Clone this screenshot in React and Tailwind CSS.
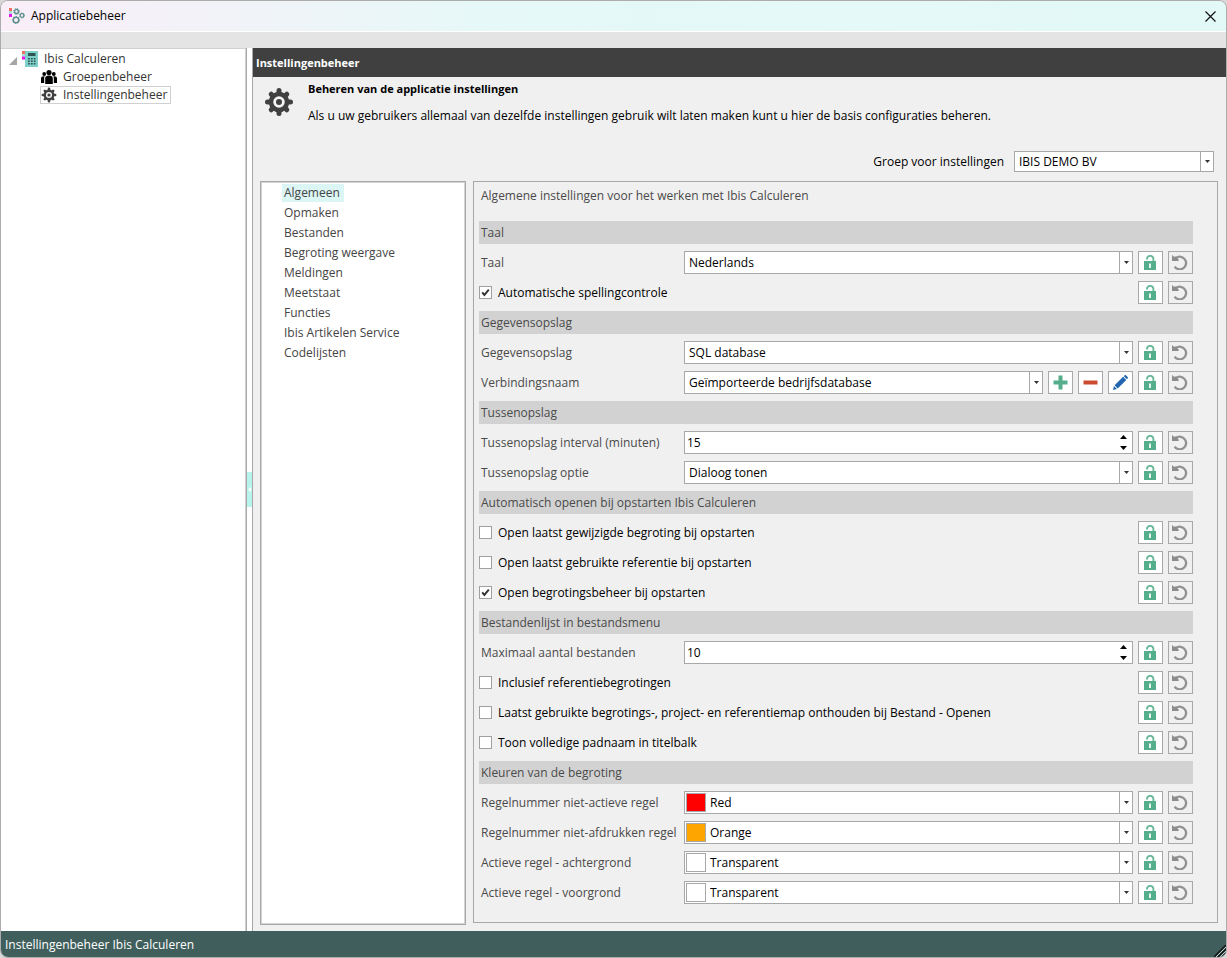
import { useState } from "react";

const CATEGORIES = [
  "Algemeen",
  "Opmaken",
  "Bestanden",
  "Begroting weergave",
  "Meldingen",
  "Meetstaat",
  "Functies",
  "Ibis Artikelen Service",
  "Codelijsten",
];

const SETTINGS = [
  { type: "header", label: "Taal" },
  { type: "select", id: "taal", label: "Taal", value: "Nederlands" },
  { type: "check", id: "spelling", label: "Automatische spellingcontrole", checked: true },
  { type: "header", label: "Gegevensopslag" },
  { type: "select", id: "opslag", label: "Gegevensopslag", value: "SQL database" },
  {
    type: "select",
    id: "verbinding",
    label: "Verbindingsnaam",
    value: "Geïmporteerde bedrijfsdatabase",
    editable: true,
  },
  { type: "header", label: "Tussenopslag" },
  { type: "number", id: "interval", label: "Tussenopslag interval (minuten)", value: 15 },
  { type: "select", id: "optie", label: "Tussenopslag optie", value: "Dialoog tonen" },
  { type: "header", label: "Automatisch openen bij opstarten Ibis Calculeren" },
  { type: "check", id: "laatstGewijzigd", label: "Open laatst gewijzigde begroting bij opstarten" },
  { type: "check", id: "laatstReferentie", label: "Open laatst gebruikte referentie bij opstarten" },
  { type: "check", id: "begrotingsbeheer", label: "Open begrotingsbeheer bij opstarten", checked: true },
  { type: "header", label: "Bestandenlijst in bestandsmenu" },
  { type: "number", id: "maxBestanden", label: "Maximaal aantal bestanden", value: 10 },
  { type: "check", id: "inclReferentie", label: "Inclusief referentiebegrotingen" },
  {
    type: "check",
    id: "mapOnthouden",
    label: "Laatst gebruikte begrotings-, project- en referentiemap onthouden bij Bestand - Openen",
  },
  { type: "check", id: "padnaam", label: "Toon volledige padnaam in titelbalk" },
  { type: "header", label: "Kleuren van de begroting" },
  { type: "select", id: "nietActief", label: "Regelnummer niet-actieve regel", value: "Red", swatch: "bg-[#ff0000]" },
  {
    type: "select",
    id: "nietAfdrukken",
    label: "Regelnummer niet-afdrukken regel",
    value: "Orange",
    swatch: "bg-[#ffa500]",
  },
  { type: "select", id: "achtergrond", label: "Actieve regel - achtergrond", value: "Transparent", swatch: "bg-white" },
  { type: "select", id: "voorgrond", label: "Actieve regel - voorgrond", value: "Transparent", swatch: "bg-white" },
];

export default function App() {
  const [category, setCategory] = useState("Algemeen");

  return (
    <div className="min-h-screen bg-[#d8d8d8] flex flex-col font-['Open_Sans','Noto_Sans',sans-serif] text-xs leading-4 text-black">
      <div className="flex-1 flex flex-col rounded-lg border border-[#acacac] bg-[#f0f0f0] overflow-hidden">
        {/* ── Title bar ── */}
        <header className="h-[31px] shrink-0 flex items-center gap-1.5 px-2 border-b border-white bg-linear-to-r from-[#faeef8] via-[#e6f8f8] via-40% to-[#e2f9f7]">
          <AppLogo />
          <h1 className="flex-1">Applicatiebeheer</h1>
          <button type="button" aria-label="Sluiten" className="p-0.5">
            <svg width="11" height="11" viewBox="0 0 11 11" stroke="#111" strokeWidth="1.2">
              <path d="M.5.5l10 10M10.5.5l-10 10" />
            </svg>
          </button>
        </header>
        <div className="h-4 shrink-0 bg-[#e4e4e4]" />

        <div className="flex-1 flex">
          <Tree />

          {/* ── Splitter ── */}
          <div className="w-[7px] shrink-0 flex items-center border-x border-[#a8a8a8] bg-white">
            <div className="w-full h-[35px] flex items-center justify-center bg-[#b8f4ee]">
              <svg width="3" height="5" viewBox="0 0 3 5" fill="#fff">
                <path d="M3 0v5L0 2.5z" />
              </svg>
            </div>
          </div>

          <main className="flex-1 min-w-0 flex flex-col">
            <h2 className="h-[29px] shrink-0 flex items-center px-[3px] bg-[#404040] text-white text-[11px] font-bold">
              Instellingenbeheer
            </h2>

            <div className="flex-1 flex flex-col pl-[7px] pr-2 pb-1.5">
              <div className="flex gap-3.5 pt-1 pl-1">
                <Gear className="size-[30px] mt-1.5" />
                <div className="flex flex-col gap-[11px]">
                  <h3 className="text-[11px] leading-4 font-bold">Beheren van de applicatie instellingen</h3>
                  <p>
                    Als u uw gebruikers allemaal van dezelfde instellingen gebruik wilt laten maken kunt u hier de basis
                    configuraties beheren.
                  </p>
                </div>
              </div>

              <div className="flex items-center justify-end gap-2.5 mt-[27px] mb-[9px] pr-1">
                <label htmlFor="groep">Groep voor instellingen</label>
                <div className="w-[200px] h-[21px] flex">
                  <SelectBox id="groep" value="IBIS DEMO BV" />
                </div>
              </div>

              <div className="flex-1 flex gap-[7px]">
                <nav className="w-[206px] shrink-0 border border-[#a8a8a8] bg-white">
                  <ul className="h-full border border-[#d4d4d4] pl-5">
                    {CATEGORIES.map((name) => (
                      <li key={name} className="h-5 flex items-center">
                        <button
                          type="button"
                          onClick={() => setCategory(name)}
                          className={`h-[18px] pl-0.5 pr-1 text-[#444] ${name === category ? "bg-[#dcf5f5]" : ""}`}
                        >
                          {name}
                        </button>
                      </li>
                    ))}
                  </ul>
                </nav>

                <form className="flex-1 min-w-0 mb-0.5 border border-[#a8a8a8] pt-1.5 pl-[5px] pr-6 pb-[17px]">
                  <p className="pl-0.5 mb-[17px] text-[#4a4a4a]">
                    Algemene instellingen voor het werken met Ibis Calculeren
                  </p>
                  <div className="flex flex-col gap-[7px]">
                    {SETTINGS.map((item) => (
                      <SettingRow key={item.id || `h-${item.label}`} item={item} />
                    ))}
                  </div>
                </form>
              </div>
            </div>
          </main>
        </div>

        {/* ── Status bar ── */}
        <footer className="h-[26px] shrink-0 flex items-end justify-between pl-1 bg-[#405f5c] text-white">
          <span className="pb-1">Instellingenbeheer Ibis Calculeren</span>
          <svg width="12" height="12" viewBox="0 0 12 12" fill="none">
            <path d="M0 12L12 0M4 12l8-8M8 12l4-4" stroke="#111" strokeWidth="1.4" />
            <path d="M2 12L12 2M6 12l6-6" stroke="#b9d2cf" strokeWidth="1" />
          </svg>
        </footer>
      </div>
    </div>
  );
}

// ── Tree on the left ──
function Tree() {
  return (
    <nav className="w-[245px] shrink-0 border-t border-r border-[#d0d0d0] bg-white text-[#333] pt-px">
      <button type="button" className="h-[18px] flex items-center pl-2">
        <svg width="8" height="8" viewBox="0 0 8 8" className="mt-1">
          <path d="M8 0v8H0z" fill="#a6a6a6" />
        </svg>
        <Calculator />
        <span className="pl-1.5">Ibis Calculeren</span>
      </button>
      <ul className="pl-[39px]">
        <li>
          <button type="button" className="h-[18px] flex items-center gap-1.5 pl-px">
            <People />
            Groepenbeheer
          </button>
        </li>
        <li>
          <button type="button" className="h-[18px] flex items-center gap-1.5 pr-[3px] border border-[#d0d0d0]">
            <Gear className="size-4" />
            Instellingenbeheer
          </button>
        </li>
      </ul>
    </nav>
  );
}

// ── One line of the settings form ──
function SettingRow({ item }) {
  if (item.type === "header") {
    return <h4 className="h-[23px] flex items-center pl-0.5 bg-[#d2d2d2] text-[#4a4a4a]">{item.label}</h4>;
  }

  return (
    <div className="h-[23px] flex gap-[5px]">
      {item.type === "check" ? (
        <div className="flex-1 flex items-center gap-1.5">
          <span className="relative size-[13px] flex">
            <input
              id={item.id}
              type="checkbox"
              defaultChecked={item.checked}
              className="peer appearance-none size-[13px] border border-[#a0a0a0] bg-white"
            />
            <svg
              viewBox="0 0 13 13"
              className="absolute inset-0 hidden peer-checked:block pointer-events-none"
              fill="none"
              stroke="#333"
              strokeWidth="1.9"
            >
              <path d="M3.2 6.3l2.2 2.6L9.8 3.6" />
            </svg>
          </span>
          <label htmlFor={item.id}>{item.label}</label>
        </div>
      ) : (
        <>
          <label htmlFor={item.id} className="w-[200px] shrink-0 flex items-center pl-0.5 text-[#4a4a4a]">
            {item.label}
          </label>
          {item.type === "select" ? (
            <SelectBox id={item.id} value={item.value} swatch={item.swatch} />
          ) : (
            <NumberBox id={item.id} value={item.value} />
          )}
        </>
      )}

      {item.editable && (
        <>
          <IconButton label="Toevoegen">
            <svg width="15" height="15" viewBox="0 0 15 15" fill="#55ae8b">
              <path d="M5.500 .5h4v5h5v4h-5v5h-4v-5h-5v-4h5z" />
            </svg>
          </IconButton>
          <IconButton label="Verwijderen">
            <svg width="15" height="15" viewBox="0 0 15 15" fill="#cb4b2f">
              <path d="M.5 5.500h14v4H.5z" />
            </svg>
          </IconButton>
          <IconButton label="Bewerken">
            <svg width="15" height="15" viewBox="0 0 16 16" fill="#2065b0">
              <path d="M0 16l1-4.200L4.200 15zM1.700 11L10.800 1.900l3.300 3.300L5 14.300zM11.500 1.200L12.300.4c.5-.5 1.200-.5 1.700 0l1.600 1.600c.5.5.5 1.200 0 1.700l-.8.8z" />
            </svg>
          </IconButton>
        </>
      )}

      <IconButton label="Vergrendelen">
        <svg width="13" height="15" viewBox="0 0 13 15">
          <path d="M3 4.600V4a3.200 3.200 0 0 1 6.400 0v2.500" fill="none" stroke="#68b899" strokeWidth="1.900" />
          <path d="M0 6h12v9H0z" fill="#55ae8b" />
          <path d="M5 8.500h2V13H5z" fill="#e4f4ee" />
        </svg>
      </IconButton>
      <button
        type="button"
        disabled
        aria-label="Herstellen"
        className="w-[25px] h-full shrink-0 flex items-center justify-center border border-[#a8a8a8]"
      >
        <svg width="17" height="15" viewBox="0 0 17 15" fill="none">
          <path d="M4 3A6.300 6.300 0 1 1 2.600 11.600" stroke="#929292" strokeWidth="2.300" />
          <path d="M0 0l2 1.800L4.200 1.400 6.600 4.400V6H0z" fill="#8c8c8c" />
        </svg>
      </button>
    </div>
  );
}

function IconButton({ label, children }) {
  return (
    <button
      type="button"
      aria-label={label}
      className="w-[25px] h-full shrink-0 flex items-center justify-center border border-[#a8a8a8] bg-white"
    >
      {children}
    </button>
  );
}

function SelectBox({ id, value, swatch }) {
  return (
    <div className="relative flex-1 min-w-0 flex border border-[#a8a8a8] bg-white">
      {swatch && <span className={`w-5 shrink-0 ml-px my-px border border-[#a8a8a8] ${swatch}`} />}
      <select id={id} defaultValue={value} className="flex-1 min-w-0 appearance-none bg-transparent pl-1 pr-4">
        <option>{value}</option>
      </select>
      <span className="absolute inset-y-0 right-0 w-[13px] flex items-center justify-center border-l border-[#a8a8a8] pointer-events-none">
        <svg width="5" height="3" viewBox="0 0 5 3" fill="#333">
          <path d="M0 0h5L2.500 3z" />
        </svg>
      </span>
    </div>
  );
}

function NumberBox({ id, value }) {
  const [current, setCurrent] = useState(value);

  return (
    <div className="flex-1 min-w-0 flex border border-[#a8a8a8] bg-white">
      <input
        id={id}
        type="text"
        inputMode="numeric"
        value={current}
        onChange={(e) => setCurrent(Number(e.target.value) || 0)}
        className="flex-1 min-w-0 pl-0.5"
      />
      <div className="w-[17px] flex flex-col justify-between py-[3px]">
        <button type="button" aria-label="Verhogen" onClick={() => setCurrent(current + 1)}>
          <svg width="7" height="4" viewBox="0 0 7 4" className="mx-auto">
            <path d="M0 4h7L3.500 0z" />
          </svg>
        </button>
        <button type="button" aria-label="Verlagen" onClick={() => setCurrent(current - 1)}>
          <svg width="7" height="4" viewBox="0 0 7 4" className="mx-auto">
            <path d="M0 0h7L3.500 4z" />
          </svg>
        </button>
      </div>
    </div>
  );
}

// ── Icons ───────────────────────────────────────────────────────────────────
function AppLogo() {
  return (
    <svg width="16" height="16" viewBox="0 0 16 16" fill="none">
      <path d="M0 0h3v3H0z" fill="#f0705c" />
      <path d="M0 3h3v3H0z" fill="#a9dcd8" />
      <path d="M0 6h3v3H0z" fill="#e312e8" />
      <g stroke="#5d8f8c">
        <circle cx="7.500" cy="3.500" r="2" strokeWidth="1.300" />
        <circle cx="7.500" cy="3.500" r="2.900" strokeWidth="1" strokeDasharray="1.100 1.200" />
        <circle cx="13" cy="7.500" r="1.800" strokeWidth="1.200" />
        <circle cx="13" cy="7.500" r="2.600" strokeWidth="1" strokeDasharray="1 1.100" />
        <circle cx="7" cy="12" r="2.700" strokeWidth="1.400" />
        <circle cx="7" cy="12" r="3.600" strokeWidth="1" strokeDasharray="1.300 1.400" />
      </g>
    </svg>
  );
}

function Calculator() {
  return (
    <svg width="16" height="16" viewBox="0 0 16 16" className="ml-[5px]">
      <path d="M3 0h13v16H3z" fill="#7fd0ca" />
      <path d="M0 0h3v3H0z" fill="#f0705c" />
      <path d="M0 3h3v2.500H0z" fill="#a9dcd8" />
      <path d="M0 5.500h3v3H0z" fill="#e312e8" />
      <path d="M6 2h7.500v3H6z" fill="#2f5552" />
      <path
        d="M6 7h1.800v1.500H6zM8.900 7h1.800v1.500H8.900zM11.800 7h1.700v1.500h-1.700zM6 9.500h1.800V11H6zM8.900 9.500h1.800V11H8.900zM11.800 9.500h1.700V11h-1.700zM6 12h1.800v1.500H6zM8.900 12h1.800v1.500H8.900zM11.800 12h1.700v1.500h-1.700z"
        fill="#2f5552"
      />
    </svg>
  );
}

function People() {
  return (
    <svg width="16" height="14" viewBox="0 0 16 14">
      <circle cx="8" cy="2.600" r="2.600" />
      <circle cx="3.200" cy="4" r="1.900" />
      <circle cx="12.800" cy="4" r="1.900" />
      <path d="M4.200 14V8.500C4.200 6.500 5.600 5.600 8 5.600s3.800.9 3.800 2.900V14z" />
      <path d="M0 13V8.600C0 7 1 6.200 2.800 6.200h.8c-.3.600-.4 1.200-.4 2V13zM16 13V8.600c0-1.600-1-2.400-2.800-2.400h-.8c.3.600.4 1.200.4 2V13z" />
    </svg>
  );
}

function Gear({ className }) {
  return (
    <svg viewBox="0 0 30 30" className={className}>
      <g stroke="#404040" strokeWidth="5" strokeLinecap="round">
        <path d="M15 3.500v23M3.500 15h23M7.200 7.200l15.600 15.600M22.800 7.200L7.200 22.800" />
      </g>
      <circle cx="15" cy="15" r="8" fill="#f4f4f4" stroke="#404040" strokeWidth="4.500" />
      <circle cx="15" cy="15" r="3" fill="#404040" />
    </svg>
  );
}
